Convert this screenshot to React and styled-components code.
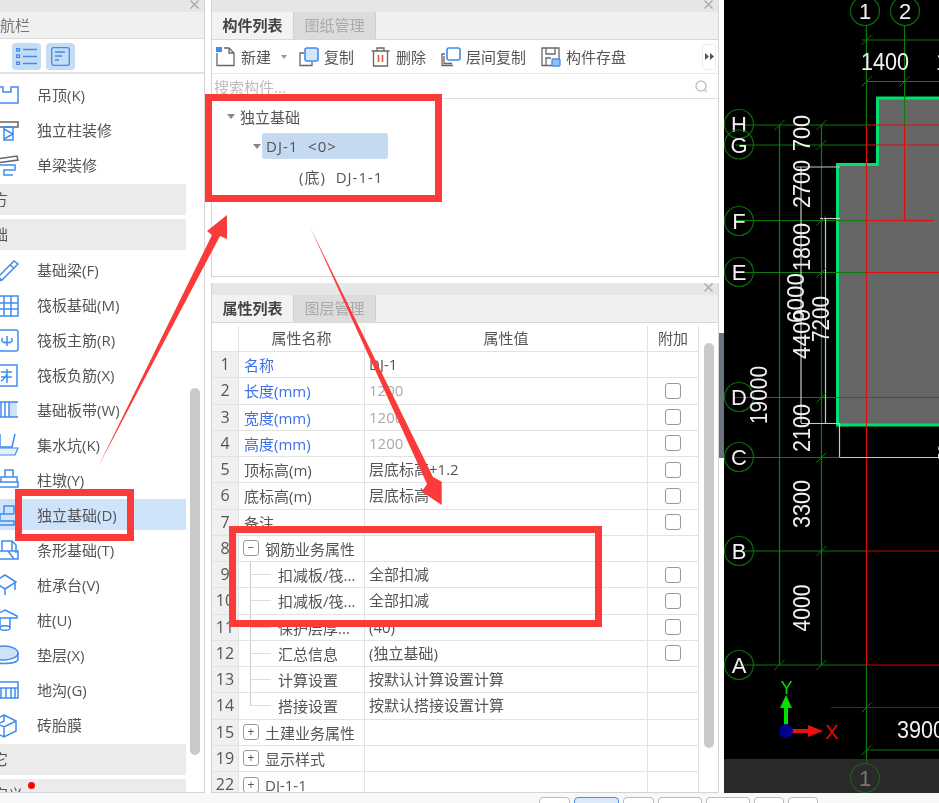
import React from 'react';
import styled, { createGlobalStyle } from 'styled-components';

const Global = createGlobalStyle`
  html, body { margin: 0; padding: 0; background: #f8f8f8; }
  body { font-family: "Open Sans", "Noto Sans CJK SC", "Noto Sans", sans-serif; color: #555; }
`;

const BLUE = '#3f8cee';

// sidebar icons, drawn with x = page pixels (they run off the left edge)
const Ic = ({ children }) => (
  <IconSvg viewBox="-7 0 26 26" fill="none" stroke={BLUE} strokeWidth="1.5">
    {children}
  </IconSvg>
);

const icons = {
  ceiling: <path d="M-4 5H3V10H11V5H18V21H-4" />,
  column: (
    <>
      <path d="M-4 5H18V10H-4" stroke="#666" />
      <path d="M4 10H13V23H4ZM4 12L13 17L4 22" />
    </>
  ),
  beam: (
    <>
      <path d="M-4 7L17 4L18 8L-4 11" stroke="#666" />
      <path d="M-4 13H15V18H4V23H13" />
    </>
  ),
  foundBeam: <path d="M-2 20L14 4L18 7L2 23L-3 24ZM-2 20L2 23M10 8L14 11" />,
  raft: <path d="M-4 4H18V24H-4ZM4 4V24M11 4V24M-4 11H18M-4 17H18" />,
  mainBar: (
    <>
      <rect x="-4" y="3" width="22" height="21" rx="2" />
      <path d="M7 9V19M3 11C0 13 3 17 7 15C11 17 14 13 11 11" />
    </>
  ),
  negBar: (
    <>
      <path d="M-4 3H17V24H-4" />
      <path d="M1 10H12M1 15H12M7 7V21M7 12C5 16 3 18 1 19" />
    </>
  ),
  strip: (
    <>
      <rect x="9" y="5" width="8" height="15" fill="#cfe2fa" stroke="none" />
      <path d="M-4 5H18M-4 20H18M1 5V20M5 5V20M9 5V20" />
    </>
  ),
  pit: (
    <>
      <path d="M0 2V15H12L15 2" />
      <path d="M-4 16H18L15 23H-4Z" fill="#e4effc" strokeWidth="1.2" />
    </>
  ),
  pier: <path d="M5 3H13V10H5ZM1 10H17V15H1ZM-4 15H18V20H-4Z" />,
  isolated: (
    <>
      <path d="M4 12V4H14V12M4 12H14" />
      <path d="M-3 19H14V23H-3ZM0 19V12H4" />
    </>
  ),
  stripF: <path d="M2 4H12V14H2ZM-4 14H18V22H-4ZM8 14L14 22M12 4L16 8V16" />,
  cap: <path d="M5 3L16 10L5 17L-6 10ZM-4 11V18M5 17V23M15 11V18" />,
  pile: <path d="M5 3L17 9V11H-7V9ZM0 11V21C0 24 10 24 10 21V11M0 21C0 18 10 18 10 21" />,
  pad: (
    <>
      <ellipse cx="4" cy="11" rx="14" ry="7" fill="#cfe2fa" />
      <path d="M-10 11V17C-10 23 18 23 18 17V11" />
    </>
  ),
  trench: <path d="M-4 5H18V21H-4ZM-4 11H18M1 11V21M6 11V21M11 11V21M15 11V21" />,
  brick: <path d="M4 3L16 9V19L4 25L-8 19V9ZM-8 9L4 15L16 9M4 15V25M4 3V9L-2 12" />,
};

const listA = [
  { icon: 'ceiling', text: '吊顶(K)' },
  { icon: 'column', text: '独立柱装修' },
  { icon: 'beam', text: '单梁装修' },
];

const listB = [
  { icon: 'foundBeam', text: '基础梁(F)' },
  { icon: 'raft', text: '筏板基础(M)' },
  { icon: 'mainBar', text: '筏板主筋(R)' },
  { icon: 'negBar', text: '筏板负筋(X)' },
  { icon: 'strip', text: '基础板带(W)' },
  { icon: 'pit', text: '集水坑(K)' },
  { icon: 'pier', text: '柱墩(Y)' },
  { icon: 'isolated', text: '独立基础(D)', active: true },
  { icon: 'stripF', text: '条形基础(T)' },
  { icon: 'cap', text: '桩承台(V)' },
  { icon: 'pile', text: '桩(U)' },
  { icon: 'pad', text: '垫层(X)' },
  { icon: 'trench', text: '地沟(G)' },
  { icon: 'brick', text: '砖胎膜' },
];

const rows = [
  { n: 1, name: '名称', value: 'DJ-1', blue: true },
  { n: 2, name: '长度(mm)', value: '1200', blue: true, dim: true, check: true },
  { n: 3, name: '宽度(mm)', value: '1200', blue: true, dim: true, check: true },
  { n: 4, name: '高度(mm)', value: '1200', blue: true, dim: true, check: true },
  { n: 5, name: '顶标高(m)', value: '层底标高+1.2', check: true },
  { n: 6, name: '底标高(m)', value: '层底标高', check: true },
  { n: 7, name: '备注', value: '', check: true },
  { n: 8, name: '钢筋业务属性', value: '', toggle: '−' },
  { n: 9, name: '扣减板/筏...', value: '全部扣减', child: true, check: true },
  { n: 10, name: '扣减板/筏...', value: '全部扣减', child: true, check: true },
  { n: 11, name: '保护层厚...', value: '(40)', child: true, check: true },
  { n: 12, name: '汇总信息', value: '(独立基础)', child: true, check: true },
  { n: 13, name: '计算设置', value: '按默认计算设置计算', child: true },
  { n: 14, name: '搭接设置', value: '按默认搭接设置计算', child: true, last: true },
  { n: 15, name: '土建业务属性', value: '', toggle: '+' },
  { n: 19, name: '显示样式', value: '', toggle: '+' },
  { n: 22, name: 'DJ-1-1', value: '', toggle: '+' },
];

const CloseIcon = () => (
  <svg width="9" height="9" viewBox="0 0 9 9" stroke="#a8a8a8" strokeWidth="1.3">
    <path d="M0.5 0.5L8.5 8.5M8.5 0.5L0.5 8.5" />
  </svg>
);

const ToolIcon = ({ kind }) => (
  <svg width="20" height="20" viewBox="0 0 20 20" fill="none" stroke="#666" strokeWidth="1.3">
    {kind === 'new' && (
      <>
        <path d="M1 6V18.500H18V6L13 1H8" />
        <path d="M13 1V6H18" />
        <rect x="0" y="0" width="6" height="5" fill={BLUE} stroke="none" />
      </>
    )}
    {kind === 'copy' && (
      <>
        <path d="M5 6H1V18.500H13V15" />
        <rect x="6" y="1" width="13" height="13" rx="2" fill="#d5e6fb" stroke={BLUE} strokeWidth="1.6" />
      </>
    )}
    {kind === 'del' && (
      <>
        <path d="M0.500 4H18.500M6 4V1H13V4M2.500 4V19H16.500V4" />
        <path d="M7.500 8V15M11.500 8V15" stroke="#e0533f" strokeWidth="1.6" />
      </>
    )}
    {kind === 'floor' && (
      <>
        <path d="M4 7H1V18.500H12M3 9V16.500H11" />
        <rect x="6" y="1" width="13" height="12" rx="2" fill="#fff" stroke={BLUE} strokeWidth="1.6" />
      </>
    )}
    {kind === 'save' && (
      <>
        <path d="M11 18.500H1V1H18V12M5 1V7H14V1M5 18V11H10" />
        <rect x="11" y="12" width="8" height="7" rx="1" fill="#8fc0f7" stroke={BLUE} />
      </>
    )}
  </svg>
);

const tools = [
  { kind: 'copy', text: '复制', left: 12 },
  { kind: 'del', text: '删除', left: 17 },
  { kind: 'floor', text: '层间复制', left: 15 },
  { kind: 'save', text: '构件存盘', left: 15 },
];

// CAD view, coordinates are page pixels
const G = '#0a7d0a';
const R = '#e00d0d';
const W = '#c8c8c8';

const cadLines = [
  // axis lines
  [735, 125, 866, 125, G], [866, 125, 939, 125, R],
  [735, 145, 866, 145, G], [866, 145, 939, 145, R],
  [735, 220.5, 866, 220.5, G], [866, 220.5, 904.5, 220.5, R], [904.5, 220.5, 933, 220.5, R],
  [735, 272.5, 866, 272.5, G], [866, 272.5, 939, 272.5, R],
  [735, 397.5, 866, 397.5, G], [866, 397.5, 939, 397.5, R],
  [735, 457.500, 866, 457.500, G],
  [735, 551, 866, 551, G], [866, 551, 939, 551, '#b00c0c'],
  [735, 665, 866, 665, G], [866, 665, 939, 665, '#c80c0c'],
  [866.500, 26, 866.500, 125, G], [866.500, 125, 866.500, 665, R], [866.500, 665, 866.500, 793, G],
  [904.500, 26, 904.500, 125, G], [904.500, 125, 904.500, 220.5, R],
  // dimension lines
  [779.500, 125, 779.500, 665, G],
  [821.500, 125, 821.500, 665, G],
  [862, 40, 939, 40, G],
  [866, 81.500, 939, 81.500, G],
  [866, 750, 939, 750, G],
  [831, 707.500, 939, 707.500, '#8a0a0a'],
  // white dimension
  [801, 167, 801, 423, W], [796, 167, 840, 167, W],
  [825.500, 218.500, 825.500, 423, W], [820, 218.500, 840, 218.500, W],
  [801, 423.500, 840, 423.500, W],
  [839.500, 423, 839.500, 457, W], [839.500, 457.500, 939, 457.500, W],
];

const cadTicks = [
  [779.5, 125], [821.5, 125], [821.5, 145], [821.5, 220.5], [821.5, 272.5], [821.5, 397.5], [821.5, 457.5],
  [821.5, 551], [821.5, 665], [779.5, 665], [866.5, 40], [866.5, 81.5], [904.5, 81.5], [866.5, 707.5], [866.5, 750],
];

const cadBubbles = [
  [739, 124, 'H'], [739, 144.500, 'G'], [739, 221, 'F'], [739, 272, 'E'], [739, 397, 'D'], [739, 457, 'C'],
  [739, 551, 'B'], [739, 665, 'A'], [865, 11, '1'], [905, 11, '2'],
];

const cadDims = [
  [801, 133, '700', 36, true], [801, 184, '2700', 48, true], [801, 247, '1800', 48, true],
  [795, 298, '6000', 50, true], [801, 334, '4400', 50, true], [820, 319, '7200', 46, true],
  [758, 395, '19000', 58, true], [801, 428, '2100', 48, true], [801, 504, '3300', 48, true],
  [801, 608, '4000', 47, true], [885, 61, '1400', 48, false], [921, 729, '3900', 48, false],
  [960, 61, '1500', 48, false], [961, 452, '8000', 48, false],
];

const CadDrawing = () => (
  <svg width="215" height="793" viewBox="724 0 215 793" style={{ display: 'block' }}>
    <path d="M945 98H877.500V164.500H837.500V425H945Z" fill="#666" stroke="#00e070" strokeWidth="3" />
    {cadLines.map(([x1, y1, x2, y2, c], i) => (
      <line key={i} x1={x1} y1={y1} x2={x2} y2={y2} stroke={c} strokeWidth="1.2" />
    ))}
    {cadTicks.map(([x, y], i) => (
      <line key={i} x1={x - 5} y1={y + 5} x2={x + 5} y2={y - 5} stroke={G} strokeWidth="1" />
    ))}
    {cadBubbles.map(([x, y, t]) => (
      <g key={t + y}>
        <circle cx={x} cy={y} r="14.500" fill="none" stroke="#0a6a0a" strokeWidth="1.2" />
        <CadText x={x} y={y + 8} textAnchor="middle" fontSize="22">{t}</CadText>
      </g>
    ))}
    {cadDims.map(([x, y, t, len, rot]) => (
      <CadText
        key={t + x}
        x={x}
        y={y}
        textAnchor="middle"
        dominantBaseline="central"
        fontSize="24"
        textLength={len}
        lengthAdjust="spacingAndGlyphs"
        transform={rot ? `rotate(-90 ${x} ${y})` : undefined}
      >
        {t}
      </CadText>
    ))}
    {/* ucs axis */}
    <path d="M784 731V708H780L786 695L792 708H788V731Z" fill="#00e000" />
    <path d="M786 729H808V725L823 731L808 737V733H786Z" fill="#e81010" />
    <circle cx="786" cy="731" r="7" fill="#00008c" />
    <CadText x="786.500" y="694" textAnchor="middle" fontSize="18" style={{ fill: '#00e000' }}>Y</CadText>
    <CadText x="832" y="739" textAnchor="middle" fontSize="20" style={{ fill: '#e81010' }}>X</CadText>
    {/* dim strip at the bottom of the view */}
    <rect x="724" y="759" width="215" height="34" fill="#2a2a2a" />
    <circle cx="865" cy="778" r="14.500" fill="none" stroke="#1f5a1f" strokeWidth="1.2" />
    <line x1="866.500" y1="759" x2="866.500" y2="764" stroke="#1f5a1f" />
    <CadText x="865" y="786" textAnchor="middle" fontSize="22" style={{ fill: '#777' }}>1</CadText>
  </svg>
);

const Arrows = () => (
  <ArrowLayer width="939" height="803" viewBox="0 0 939 803">
    <path d="M98 467L212 235L207 231L227 215V239L220 236Z" fill="#fb3a3a" />
    <path d="M310 227L427 484L421.700 491.700L441.700 505V481.700L433 477Z" fill="#fb3a3a" />
  </ArrowLayer>
);

const App = () => {
  return (
    <>
      <Global />
      <Page>
        <Main>
          <SidePanel>
            <Strip>
              <CloseIcon />
            </Strip>
            <SideTitle>导航栏</SideTitle>
            <SideTools>
              <SideToolBtn>
                <svg width="21" height="17" viewBox="0 0 21 17" fill="none" stroke={BLUE} strokeWidth="1.3">
                  <path d="M7 1.500H21M7 8.500H21M7 15.500H21" />
                  <rect x="0.500" y="0.500" width="3" height="2.500" />
                  <rect x="0.500" y="7" width="3" height="2.500" />
                  <rect x="0.500" y="14" width="3" height="2.500" />
                </svg>
              </SideToolBtn>
              <SideToolBtn>
                <svg width="19" height="19" viewBox="0 0 19 19" fill="none" stroke={BLUE} strokeWidth="1.3">
                  <rect x="0.700" y="0.700" width="17.600" height="17.600" rx="2" />
                  <path d="M4 5H14M4 9H11M4 13H8" />
                </svg>
              </SideToolBtn>
            </SideTools>
            <SideList>
              {listA.map((it) => (
                <SideRow key={it.text}>
                  <Ic>{icons[it.icon]}</Ic>
                  {it.text}
                </SideRow>
              ))}
              <SideGroup>土方</SideGroup>
              <SideGroup>基础</SideGroup>
              {listB.map((it) => (
                <SideRow key={it.text} $active={it.active}>
                  <Ic>{icons[it.icon]}</Ic>
                  {it.text}
                </SideRow>
              ))}
              <SideGroup>其它</SideGroup>
              <SideGroup>
                自定义
                <RedDot />
              </SideGroup>
              <SideScroll />
            </SideList>
          </SidePanel>

          <Center>
            <TopPanel>
              <Strip>
                <CloseIcon />
              </Strip>
              <TabBar>
                <Tab $active>构件列表</Tab>
                <Tab>图纸管理</Tab>
              </TabBar>
              <ToolBar>
                <ToolItem $left={4}>
                  <ToolIcon kind="new" />
                  新建
                  <Caret />
                </ToolItem>
                {tools.map((t) => (
                  <ToolItem key={t.text} $left={t.left}>
                    <ToolIcon kind={t.kind} />
                    {t.text}
                  </ToolItem>
                ))}
                <MoreBtn>
                  <svg width="9" height="7" viewBox="0 0 9 7" fill="#555">
                    <path d="M0 0L4 3.500L0 7ZM5 0L9 3.500L5 7Z" />
                  </svg>
                </MoreBtn>
              </ToolBar>
              <SearchBar>
                搜索构件...
                <svg width="13" height="13" viewBox="0 0 13 13" fill="none" stroke="#c4c4c4" strokeWidth="1.5">
                  <circle cx="6" cy="6" r="5" />
                  <path d="M9.500 9.500L12 12" />
                </svg>
              </SearchBar>
              <Tree>
                <TreeRow $indent={15}>
                  <TreeCaret />
                  独立基础
                </TreeRow>
                <TreeRow $indent={41}>
                  <TreeCaret />
                  <TreeSel>DJ-1&nbsp;&nbsp;&lt;0&gt;</TreeSel>
                </TreeRow>
                <TreeRow $indent={87}>
                  <TreeLeaf>(底)&nbsp;&nbsp;DJ-1-1</TreeLeaf>
                </TreeRow>
              </Tree>
            </TopPanel>

            <BottomPanel>
              <Strip>
                <CloseIcon />
              </Strip>
              <TabBar>
                <Tab $active>属性列表</Tab>
                <Tab>图层管理</Tab>
              </TabBar>
              <TableWrap>
                <Table>
                  <HeadRow>
                    <HeadCell />
                    <HeadCell>属性名称</HeadCell>
                    <HeadCell>属性值</HeadCell>
                    <HeadCell>附加</HeadCell>
                  </HeadRow>
                  {rows.map((r) => (
                    <Row key={r.n}>
                      <NumCell>{r.n}</NumCell>
                      <NameCell $blue={r.blue}>
                        {r.toggle && <Toggle>{r.toggle}</Toggle>}
                        {r.child && <TreeLine $last={r.last} />}
                        <NameText $child={r.child} $group={r.toggle}>{r.name}</NameText>
                      </NameCell>
                      <ValueCell $dim={r.dim}>{r.value}</ValueCell>
                      <CheckCell>{r.check && <CheckBox />}</CheckCell>
                    </Row>
                  ))}
                </Table>
                <TableScroll>
                  <ScrollThumb />
                </TableScroll>
              </TableWrap>
            </BottomPanel>
          </Center>

          <Splitter>
            <SplitHandle />
          </Splitter>
          <Canvas>
            <CadDrawing />
          </Canvas>
        </Main>
        <Footer>
          <FootTab $w={31} />
          <FootTab $w={45} $active />
          <FootTab $w={31} />
          <FootTab $w={44} />
          <FootTab $w={44} />
          <FootTab $w={30} />
          <FootTab $w={30} />
        </Footer>

        <MarkBox $x={205} $y={94} $w={237} $h={108} />
        <MarkBox $x={15} $y={489} $w={119} $h={52} />
        <MarkBox $x={229} $y={526} $w={373} $h={101} />
        <Arrows />
      </Page>
    </>
  );
};

export default App;

const Page = styled.div`
  position: relative;
  width: 939px;
  height: 803px;
  overflow: hidden;
  background: #f8f8f8;
  font-size: 15px;
  filter: blur(0.4px);
`;

const Main = styled.div`
  display: flex;
  height: 793px;
  background: #fff;
`;

const Strip = styled.div`
  display: flex;
  flex: none;
  justify-content: flex-end;
  align-items: flex-start;
  height: 12px;
  padding-right: 5px;
  background: #e6e6e6;
  overflow: hidden;
`;

const SidePanel = styled.div`
  display: flex;
  flex-direction: column;
  flex: none;
  width: 204px;
  box-sizing: content-box;
  border-right: 1px solid #d4d4d4;
  background: #fff;
`;

const SideTitle = styled.div`
  flex: none;
  height: 26px;
  margin-left: -15px;
  line-height: 27px;
  background: #f0f0f0;
  border-bottom: 1px solid #dcdcdc;
  color: #777;
`;

const SideTools = styled.div`
  display: flex;
  flex: none;
  gap: 5px;
  height: 35px;
  padding: 4px 0 0 12px;
  box-sizing: border-box;
  border-bottom: 2px solid #e2e2e2;
`;

const SideToolBtn = styled.div`
  display: flex;
  align-items: center;
  justify-content: center;
  width: 29px;
  height: 27px;
  border-radius: 4px;
  background: #c5dcf5;
`;

const SideList = styled.div`
  position: relative;
  display: flex;
  flex-direction: column;
  flex: 1;
  gap: 4px;
  padding-top: 5px;
  overflow: hidden;
  border-bottom: 1px solid #d4d4d4;
`;

const SideRow = styled.div`
  display: flex;
  flex: none;
  align-items: center;
  gap: 18px;
  width: 186px;
  height: 31px;
  background: ${(p) => (p.$active ? '#cfe4fb' : 'transparent')};
`;

const IconSvg = styled.svg`
  flex: none;
  width: 26px;
  height: 26px;
  margin-left: -7px;
`;

const SideGroup = styled.div`
  position: relative;
  flex: none;
  width: 208px;
  height: 31px;
  margin-left: -22px;
  line-height: 31px;
  background: #ebebeb;
`;

const RedDot = styled.span`
  position: absolute;
  left: 50px;
  top: 3px;
  width: 7px;
  height: 7px;
  border-radius: 50%;
  background: #f00;
`;

const SideScroll = styled.div`
  position: absolute;
  left: 190px;
  top: 314px;
  width: 10px;
  height: 367px;
  border-radius: 5px;
  background: #c9c9c9;
`;

const Center = styled.div`
  display: flex;
  flex-direction: column;
  flex: none;
  gap: 6px;
  width: 508px;
  margin-left: 6px;
`;

const TopPanel = styled.div`
  display: flex;
  flex-direction: column;
  flex: none;
  height: 277px;
  box-sizing: border-box;
  border: 1px solid #d4d4d4;
  border-top: 0;
`;

const BottomPanel = styled.div`
  display: flex;
  flex-direction: column;
  flex: 1;
  min-height: 0;
  border: 1px solid #d4d4d4;
  border-top: 0;
  overflow: hidden;
`;

const TabBar = styled.div`
  display: flex;
  flex: none;
  height: 28px;
  background: #f0f0f0;
  border-bottom: 1px solid #d8d8d8;
  box-sizing: border-box;
`;

const Tab = styled.div`
  width: 81px;
  line-height: 27px;
  text-align: center;
  border-right: 1px solid #d0d0d0;
  background: ${(p) => (p.$active ? '#f2f2f2' : '#dcdcdc')};
  color: ${(p) => (p.$active ? '#444' : '#aaa')};
  font-weight: ${(p) => (p.$active ? 700 : 400)};
`;

const ToolBar = styled.div`
  display: flex;
  flex: none;
  align-items: center;
  height: 34px;
  border-bottom: 1px solid #e6e6e6;
  box-sizing: border-box;
`;

const ToolItem = styled.div`
  display: flex;
  align-items: center;
  gap: 5px;
  margin-left: ${(p) => p.$left}px;
`;

const Caret = styled.span`
  width: 0;
  height: 0;
  margin: 0 0 0 5px;
  border: 3px solid transparent;
  border-top: 4px solid #999;
  border-bottom: 0;
`;

const MoreBtn = styled.div`
  display: flex;
  align-items: center;
  justify-content: center;
  width: 12px;
  height: 24px;
  margin-left: auto;
  margin-right: 2px;
  border: 1px solid #eee;
  border-radius: 3px;
`;

const SearchBar = styled.div`
  display: flex;
  flex: none;
  align-items: center;
  justify-content: space-between;
  height: 25px;
  padding: 0 10px 0 2px;
  border-bottom: 1px solid #dedede;
  box-sizing: border-box;
  color: #bbb;
`;

const Tree = styled.div`
  display: flex;
  flex-direction: column;
  flex: 1;
  gap: 4px;
  padding-top: 4px;
`;

const TreeRow = styled.div`
  display: flex;
  align-items: center;
  height: 26px;
  margin-left: ${(p) => p.$indent}px;
  color: #555;
`;

const TreeCaret = styled.span`
  width: 0;
  height: 0;
  margin-right: 5px;
  border: 4px solid transparent;
  border-top: 5px solid #888;
  border-bottom: 0;
`;

const TreeSel = styled.div`
  width: 122px;
  margin-left: -4px;
  padding-left: 4px;
  line-height: 26px;
  letter-spacing: 1px;
  border-radius: 3px;
  background: #c5d9f1;
`;

const TreeLeaf = styled.span`
  letter-spacing: 1px;
`;

const TableWrap = styled.div`
  display: flex;
  flex: 1;
  min-height: 0;
  margin-top: 3px;
`;

const Table = styled.div`
  flex: none;
  width: 487px;
`;

const rowGrid = `
  display: grid;
  grid-template-columns: 27px 126px 283px 51px;
`;

const HeadRow = styled.div`
  ${rowGrid}
  height: 26px;
  box-sizing: border-box;
`;

const HeadCell = styled.div`
  line-height: 25px;
  text-align: center;
  border-right: 1.500px solid #e2e2e2;
  border-bottom: 1.500px solid #e2e2e2;
  background: #fff;
`;

const Row = styled.div`
  ${rowGrid}
  height: 26.250px;
  box-sizing: border-box;
`;

const cellLine = `
  border-right: 1.500px solid #e2e2e2;
  border-bottom: 1.500px solid #e2e2e2;
  box-sizing: border-box;
  white-space: nowrap;
  overflow: hidden;
`;

const NumCell = styled.div`
  ${cellLine}
  text-align: center;
  font-size: 16px;
  line-height: 25px;
  background: #f0f0f0;
`;

const NameCell = styled.div`
  ${cellLine}
  position: relative;
  display: flex;
  align-items: center;
  padding-left: 5px;
  color: ${(p) => (p.$blue ? '#3f6fe8' : '#555')};
`;

const NameText = styled.span`
  margin-left: ${(p) => (p.$child ? 34 : p.$group ? 6 : 0)}px;
`;

const Toggle = styled.span`
  flex: none;
  width: 14px;
  height: 14px;
  border: 1px solid #999;
  border-radius: 3px;
  text-align: center;
  font-size: 12px;
  line-height: 13px;
  margin-left: -1px;
  color: #555;
`;

const TreeLine = styled.span`
  position: absolute;
  left: 11px;
  top: 0;
  width: 20px;
  height: ${(p) => (p.$last ? '50%' : '100%')};
  border-left: 1px solid #ccc;

  &::after {
    content: '';
    position: absolute;
    left: 0;
    top: 12px;
    width: 20px;
    border-top: 1px solid #ddd;
  }
`;

const ValueCell = styled.div`
  ${cellLine}
  padding-left: 4px;
  line-height: 25px;
  color: ${(p) => (p.$dim ? '#aaa' : '#555')};
`;

const CheckCell = styled.div`
  ${cellLine}
  display: flex;
  align-items: center;
  justify-content: center;
`;

const CheckBox = styled.span`
  width: 14px;
  height: 14px;
  border: 1.500px solid #999;
  border-radius: 3px;
  background: #fff;
`;

const TableScroll = styled.div`
  flex: 1;
  padding: 17px 0 0 5px;
`;

const ScrollThumb = styled.div`
  width: 10px;
  height: 405px;
  border-radius: 5px;
  background: #c9c9c9;
`;

const Splitter = styled.div`
  flex: none;
  width: 5px;
  background: #fff;
`;

const SplitHandle = styled.div`
  height: 125px;
  margin-top: 333px;
  background: #6b7580;
`;

const Canvas = styled.div`
  flex: none;
  width: 215px;
  background: #000;
`;

const CadText = styled.text`
  font-family: "Liberation Sans", sans-serif;
  fill: #f0f0f0;
`;

const Footer = styled.div`
  display: flex;
  gap: 4px;
  height: 10px;
  padding: 4px 0 0 539px;
  box-sizing: border-box;
  overflow: hidden;
`;

const FootTab = styled.div`
  flex: none;
  width: ${(p) => p.$w}px;
  height: 20px;
  box-sizing: border-box;
  border: 1px solid ${(p) => (p.$active ? '#4a90e2' : '#bbb')};
  border-radius: 4px;
  background: ${(p) => (p.$active ? '#dbe9fa' : '#fff')};
`;

const MarkBox = styled.div`
  position: absolute;
  left: ${(p) => p.$x}px;
  top: ${(p) => p.$y}px;
  width: ${(p) => p.$w}px;
  height: ${(p) => p.$h}px;
  box-sizing: border-box;
  border: 7px solid #fb3a3a;
`;

const ArrowLayer = styled.svg`
  position: absolute;
  left: 0;
  top: 0;
`;
